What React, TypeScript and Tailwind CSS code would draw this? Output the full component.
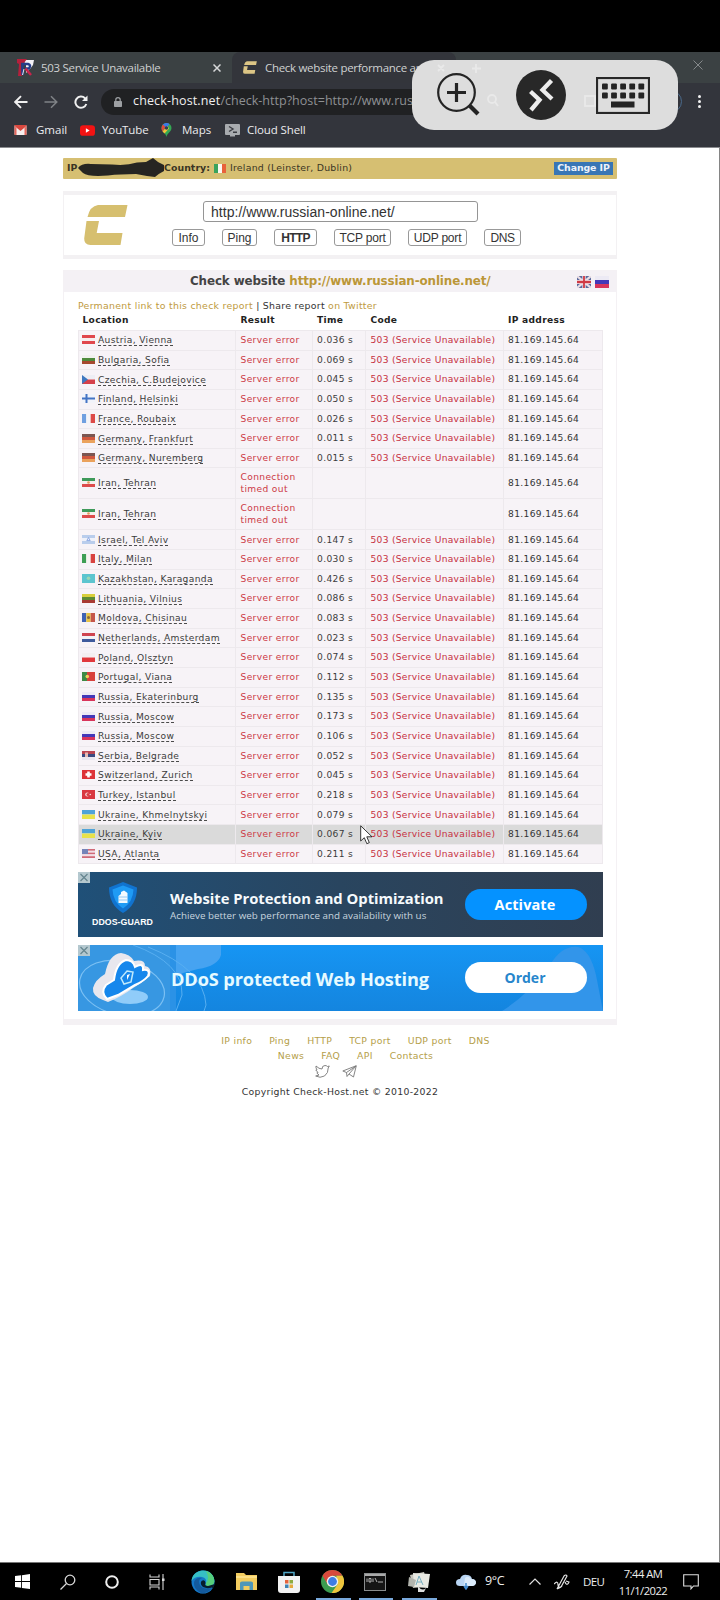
import React from "react";

type Row = [flag: string, location: string, time: string | null];

const rows: Row[] = [
  ["at", "Austria, Vienna", "0.036 s"],
  ["bg", "Bulgaria, Sofia", "0.069 s"],
  ["cz", "Czechia, C.Budejovice", "0.045 s"],
  ["fi", "Finland, Helsinki", "0.050 s"],
  ["fr", "France, Roubaix", "0.026 s"],
  ["de", "Germany, Frankfurt", "0.011 s"],
  ["de", "Germany, Nuremberg", "0.015 s"],
  ["ir", "Iran, Tehran", null],
  ["ir", "Iran, Tehran", null],
  ["il", "Israel, Tel Aviv", "0.147 s"],
  ["it", "Italy, Milan", "0.030 s"],
  ["kz", "Kazakhstan, Karaganda", "0.426 s"],
  ["lt", "Lithuania, Vilnius", "0.086 s"],
  ["md", "Moldova, Chisinau", "0.083 s"],
  ["nl", "Netherlands, Amsterdam", "0.023 s"],
  ["pl", "Poland, Olsztyn", "0.074 s"],
  ["pt", "Portugal, Viana", "0.112 s"],
  ["ru", "Russia, Ekaterinburg", "0.135 s"],
  ["ru", "Russia, Moscow", "0.173 s"],
  ["ru", "Russia, Moscow", "0.106 s"],
  ["rs", "Serbia, Belgrade", "0.052 s"],
  ["ch", "Switzerland, Zurich", "0.045 s"],
  ["tr", "Turkey, Istanbul", "0.218 s"],
  ["ua", "Ukraine, Khmelnytskyi", "0.079 s"],
  ["ua", "Ukraine, Kyiv", "0.067 s"],
  ["us", "USA, Atlanta", "0.211 s"],
];

const horizontal: Record<string, string[]> = {
  at: ["#e0474c", "#f6eeee", "#e0474c"],
  bg: ["#f1f1ee", "#4d8a3c", "#a5492f"],
  cz: ["#eeeef4", "#d5404a"],
  de: ["#7b5652", "#d0583f", "#eaa25c"],
  ir: ["#3f9a5a", "#f6f1ee", "#dd4c4c"],
  il: ["#b9cdec", "#eef1fa", "#b9cdec"],
  lt: ["#d8cf3c", "#5c8a35", "#a83a32"],
  nl: ["#cf4450", "#f2f2f6", "#3d5a9c"],
  pl: ["#f3eff1", "#e0383c"],
  ru: ["#eceaf4", "#4338b8", "#d8345a"],
  rs: ["#b94450", "#3a4a80", "#e9e6ee"],
  ua: ["#4fa3d8", "#e8e24a"],
  us: ["#d06a78", "#efdfe6", "#d06a78", "#efdfe6", "#d06a78"],
};

const vertical: Record<string, string[]> = {
  fr: ["#6f9fe0", "#f4f4f8", "#dd4a48"],
  it: ["#3d9e54", "#f6f4f2", "#d8423f"],
  ie: ["#3aa35c", "#fbf7f0", "#e8623a"],
  md: ["#3f62b4", "#e8c343", "#c5564a"],
};

const base: Record<string, string> = {
  fi: "#f1f3fa",
  kz: "#5cc5cf",
  pt: "#d8413c",
  ch: "#dd3338",
  tr: "#d93840",
  gb: "#5a6a9c",
};

function Flag({ code, className = "w-[13px] h-[9px]" }: { code: string; className?: string }) {
  const h = horizontal[code];
  const v = vertical[code];
  return (
    <svg viewBox="0 0 13 9" preserveAspectRatio="none" className={`shrink-0 ${className}`}>
      <rect width="13" height="9" fill={base[code] ?? "#fff"} />
      {h?.map((c, i) => <rect key={i} y={(9 / h.length) * i} width="13" height={9 / h.length} fill={c} />)}
      {v?.map((c, i) => <rect key={i} x={(13 / v.length) * i} width={13 / v.length} height="9" fill={c} />)}
      {code === "cz" && <path d="M0 0L6 4.5L0 9z" fill="#3f78c0" />}
      {code === "fi" && <path d="M0 4.5H13M4.5 0V9" stroke="#4474c4" strokeWidth="2" />}
      {code === "ir" && <circle cx="6.5" cy="4.5" r="1.3" fill="#e59a5e" />}
      {code === "il" && <path d="M6.5 2.6L8.2 5.6H4.8z" fill="none" stroke="#7a9be0" strokeWidth=".8" />}
      {code === "kz" && <circle cx="6.5" cy="4.3" r="1.8" fill="#9bd8b4" />}
      {code === "md" && <circle cx="6.5" cy="4.5" r="1.5" fill="#8a6a3a" />}
      {code === "pt" && <><rect width="5" height="9" fill="#3e8a45" /><circle cx="5.3" cy="4.5" r="1.8" fill="#ecd35a" /></>}
      {code === "ch" && <path d="M3.5 4.5H9.5M6.5 1.5V7.5" stroke="#fff" strokeWidth="2.6" />}
      {code === "tr" && <><circle cx="5.3" cy="4.5" r="2.1" fill="#f7d8d8" /><circle cx="6.1" cy="4.5" r="1.6" fill="#d93840" /><circle cx="8.3" cy="4.5" r=".8" fill="#f7d8d8" /></>}
      {code === "rs" && <rect x="3" y="1.5" width="3" height="4.5" fill="#e5b9b4" />}
      {code === "us" && <rect width="6" height="5" fill="#7584b8" />}
      {code === "gb" && <><path d="M0 0L13 9M13 0L0 9" stroke="#e9dde4" strokeWidth="1.8" /><path d="M0 4.5H13M6.5 0V9" stroke="#f6eef0" strokeWidth="3" /><path d="M0 4.5H13M6.5 0V9" stroke="#cf3a44" strokeWidth="1.7" /></>}
    </svg>
  );
}

function Logo({ className, fill }: { className: string; fill: string }) {
  return (
    <svg viewBox="0 0 44 40" className={className} fill={fill}>
      <path d="M14 0H43.500L41 12H3.500Q6 1 14 0zM2.500 16H15L12.700 28H38.500L36.500 40H6.500Q0 40 .2 33.500z" />
    </svg>
  );
}

function Tabs() {
  return (
    <div className="flex h-[31px] bg-[#3b4143] text-[11.5px] text-[#cfd1d2]">
      <div className="flex w-[232px] items-center pl-[17px]">
        <svg viewBox="0 0 17 17" className="size-[17px]">
          <path d="M5 1H17L16 6L13 10L9 14V5z" fill="#f3f1f6" />
          <path d="M0 0H10L7 4H4V9L5 17H1L2 5L0 4z" fill="#b5203c" />
          <path d="M5.500 16V5H11Q14.500 6 12 9.500H8" fill="none" stroke="#253c8a" strokeWidth="2.500" />
          <path d="M5.500 16L7 10" stroke="#e9e6f0" strokeWidth="1" /><path d="M8.500 9.500L14 16" stroke="#c8244c" strokeWidth="2.500" />
        </svg>
        <span className="ml-[7px] w-[172px] whitespace-nowrap tracking-[-0.3px]">503 Service Unavailable</span>
        <svg viewBox="0 0 8 8" className="size-2" stroke="#d6d8d9" strokeWidth="1.500"><path d="M.5.5L7.500 7.500M7.500.5L.5 7.500" /></svg>
      </div>
      <div className="flex w-[224px] items-center rounded-t-lg bg-[#33353b] pl-[11px]">
        <Logo className="h-[13px] w-[14px]" fill="#dcc585" />
        <span className="ml-2 w-[180px] whitespace-nowrap tracking-[-0.3px]">Check website performance and</span>
      </div>
      <div className="flex flex-1 items-center justify-end pr-[17px] pb-[5px]">
        <svg viewBox="0 0 10 10" className="size-[10px]" stroke="#85898b" strokeWidth="1"><path d="M.5.5L9.500 9.500M9.500.5L.5 9.500" /></svg>
      </div>
    </div>
  );
}

function Toolbar() {
  return (
    <div className="flex h-[37px] items-center bg-[#33353c]">
      <svg viewBox="0 0 14 14" className="ml-[14px] size-[14px]" fill="none" stroke="#f0f0f0" strokeWidth="1.900"><path d="M13.500 7H1.500M7 1.200L1.200 7L7 12.800" /></svg>
      <svg viewBox="0 0 14 14" className="ml-4 size-[14px]" fill="none" stroke="#808387" strokeWidth="1.500"><path d="M.5 7H12.500M7 1.200L12.800 7L7 12.800" /></svg>
      <svg viewBox="0 0 14 14" className="ml-[16px] size-[14px]" fill="none" stroke="#f0f0f0" strokeWidth="2"><path d="M12.300 9A5.600 5.600 0 1 1 11 3.200L12.500 4.500" /><path d="M13.500.5V6H8z" fill="#f0f0f0" stroke="none" /></svg>
      <div className="ml-[13px] flex h-[26px] w-[470px] items-center rounded-full bg-[#202123] pl-[13px] text-[12.5px] text-[#8e9093]">
        <svg viewBox="0 0 8 10" className="h-[10px] w-2"><path d="M1.800 5V2.800a2.200 2.200 0 0 1 4.400 0V5" fill="none" stroke="#9da0a3" strokeWidth="1.200" /><rect y="4" width="8" height="6" rx=".8" fill="#9da0a3" /></svg>
        <span className="ml-[11px] tracking-[0.02px] whitespace-nowrap"><span className="font-medium tracking-[0.15px] text-[#f0f0f0]">check-host.net</span>/check-http?host=http://www.russian-online.net</span>
      </div>
      <div className="ml-[24px] h-[23px] w-[87px] rounded-full border border-[#4a6a8c]" />
      <div className="ml-[16px] flex flex-col gap-[2.5px]">
        {[0, 1, 2].map((i) => <span key={i} className="size-[2.5px] rounded-full bg-[#f2f2f2]" />)}
      </div>
    </div>
  );
}

function Bookmarks() {
  return (
    <div className="flex h-[28px] items-center border-b border-[#8b8c90] bg-[#33353c] pb-[7px] text-[11.5px] text-[#ececee]">
      <svg viewBox="0 0 12 10" className="ml-[14px] h-[10px] w-[13px]"><rect width="12" height="10" rx="1" fill="#f6eeee" /><path d="M0 1L6 6L12 1V0H0z" fill="#d9483f" /><path d="M0 1V10H2V3zM12 1V10H10V3z" fill="#e5665c" /></svg>
      <span className="ml-[9px] w-[44px]">Gmail</span>
      <svg viewBox="0 0 14 10" className="h-[11px] w-[15px]"><rect width="14" height="10" rx="3" fill="#f31313" /><path d="M5.500 3V7.200L9 5z" fill="#fff" /></svg>
      <span className="ml-[7px] w-[59px] tracking-[-0.1px]">YouTube</span>
      <svg viewBox="0 0 10 14" className="h-[14px] w-[11px]">
        <path d="M5 14C4.500 10 0 9 0 5A5 5 0 0 1 5 0A5 5 0 0 1 10 5C10 9 5.500 10 5 14z" fill="#34a853" />
        <path d="M1 2A5 5 0 0 1 8 1L5 5z" fill="#3c78e8" /><path d="M0 5Q0 3 1.400 1.500L4 4L1 8.500Q0 7 0 5z" fill="#e04a3c" /><path d="M1 8.500L6 3L7.500 5.500L3 10.500z" fill="#f3c03b" /><circle cx="5" cy="5" r="1.700" fill="#2c3e58" />
      </svg>
      <span className="ml-[10px] w-[43px]">Maps</span>
      <svg viewBox="0 0 15 13" className="h-[13px] w-[15px]"><rect width="15" height="11" rx="1" fill="#a8abaf" /><path d="M5 12.500H10V11H5z" fill="#a8abaf" /><path d="M4 2.500L8 5L4 7.500M8 8.300H12" fill="none" stroke="#3a3c42" strokeWidth="1.400" /></svg>
      <span className="ml-[7px] tracking-[-0.1px] whitespace-nowrap">Cloud Shell</span>
    </div>
  );
}

function RemoteControls() {
  return (
    <div className="absolute top-[60px] left-[412px] flex h-[70px] w-[266px] items-center rounded-[22px] bg-[#dddddd]">
      <svg viewBox="0 0 266 70" className="absolute inset-0 h-[70px] w-[266px]" fill="none" stroke="#e9e9e9" strokeWidth="1.800">
        <path d="M26 5L32 11M32 5L26 11M64 4V13M60 8.500H69" /><circle cx="80" cy="39" r="4" /><path d="M83 42L86 46" /><rect x="173" y="36" width="10" height="10" />
      </svg>
      <svg viewBox="0 0 44 44" className="relative ml-[24px] size-[44px]" fill="none" stroke="#242424">
        <circle cx="20.500" cy="19.500" r="18.300" strokeWidth="2.200" /><path d="M11 19.500H30M20.500 10V29" strokeWidth="3.200" /><path d="M33 32L42 41" strokeWidth="4.200" />
      </svg>
      <svg viewBox="0 0 50 50" className="relative ml-[36px] size-[50px]">
        <circle cx="25" cy="25" r="25" fill="#282828" />
        <path d="M14.500 21.500L23.500 30L15 40M35.500 10.500L26.500 20L36 29" fill="none" stroke="#ededed" strokeWidth="4.300" />
      </svg>
      <svg viewBox="0 0 54 37" className="relative ml-[30px] h-[37px] w-[54px]">
        <rect x="1" y="1" width="52" height="35" fill="none" stroke="#282828" strokeWidth="2.200" />
        {[0, 1].map((r) => [0, 1, 2, 3, 4].map((c) => <rect key={`${r}${c}`} x={6 + c * 9.1} y={6.5 + r * 9} width="5.800" height="6" rx="1" fill="#242424" />))}
        <rect x="15" y="24.500" width="23.500" height="6" fill="#242424" />
      </svg>
    </div>
  );
}

function IpBar() {
  return (
    <div className="relative flex h-[21px] items-center rounded-[1px] bg-[#d6bf72] pr-[4px] pl-1 text-[9.4px] text-[#3a3524]">
      <b className="w-[97px]">IP</b>
      <b className="w-[50px] tracking-[0.05px]">Country:</b>
      <Flag code="ie" className="h-[9px] w-[12px]" />
      <span className="ml-1 flex-1 tracking-[0.22px]">Ireland (Leinster, Dublin)</span>
      <span className="flex h-[13px] w-[59px] items-center justify-center bg-[#3876b5] text-[9.4px] font-bold tracking-[-0.1px] text-[#eef3fa]">Change IP</span>
      <svg viewBox="0 0 87 20" className="absolute top-0 left-[15px] h-5 w-[87px]">
        <path d="M0 10Q4 5 13 6L34 6.500Q48 8 59 4.500L68 4L75 0L80 4L86 7V13Q80 16 77 19L69 18L58 16Q42 16 30 17.500Q10 19 5 15z" fill="#262522" />
      </svg>
    </div>
  );
}

function SearchBox() {
  return (
    <div className="mt-[12px] flex h-[68px] border border-[#f3f1f3] border-t-4 border-b-4">
      <Logo className="mt-[10px] ml-5 h-[40px] w-[44px]" fill="#d6bf6f" />
      <div className="ml-[44px] pt-[6px] font-['Liberation_Sans',sans-serif] text-[#333]">
        <div className="ml-[31px] flex h-[21px] w-[275px] items-center rounded-[3px] border border-[#959595] px-[7px] pt-px text-[14px] tracking-[0.03px]">http://www.russian-online.net/</div>
        <div className="mt-[7px] flex gap-[17px] text-[12px]">
          <span className="flex h-[17px] w-[33px] items-center justify-center rounded-[3px] border border-[#999]">Info</span>
          <span className="flex h-[17px] w-[35px] items-center justify-center rounded-[3px] border border-[#999]">Ping</span>
          <span className="flex h-[17px] w-[43px] items-center justify-center rounded-[3px] border border-[#999] font-bold tracking-[-0.7px]">HTTP</span>
          <span className="flex h-[17px] w-[57px] items-center justify-center rounded-[3px] border border-[#999] tracking-[-0.2px]">TCP port</span>
          <span className="flex h-[17px] w-[59px] items-center justify-center rounded-[3px] border border-[#999] tracking-[-0.2px]">UDP port</span>
          <span className="flex h-[17px] w-[37px] items-center justify-center rounded-[3px] border border-[#999] tracking-[-0.5px]">DNS</span>
        </div>
      </div>
    </div>
  );
}

function Results() {
  return (
    <div className="w-[525px] text-[9.1px] leading-[11.5px] tracking-[0.36px]">
      <div className="grid h-[16px] grid-cols-[158px_76.500px_53.500px_137.500px_1fr] items-center font-bold tracking-[0.3px] text-[#222] [&>span]:pl-[4.500px]">
        <span>Location</span><span>Result</span><span>Time</span><span>Code</span><span>IP address</span>
      </div>
      <div className="mt-px border-t border-l border-[#ede9ed]">
        {rows.map(([flag, location, time], i) => (
          <div
            key={i}
            className={`grid grid-cols-[157px_76.500px_53.500px_137.500px_1fr] [&>div]:flex [&>div]:items-center [&>div]:border-r [&>div]:border-b [&>div]:border-[#ede9ed] [&>div]:pt-px [&>div]:pl-[4.500px] ${time ? "h-[19.65px]" : "h-[31px]"} ${i === 24 ? "bg-[#dadada] [&>div]:border-[#d6d6d6]" : "bg-[#f7f3f7]"}`}
          >
            <div className="gap-[3px] whitespace-nowrap text-[#3b3b3b]">
              <Flag code={flag} className="-mt-[2px] -ml-[1.500px] h-[9px] w-[13px]" />
              <span className="border-b border-dashed border-[#4a4a4a] leading-[10px]">{location}</span>
            </div>
            <div className="text-[#cc3945]">{time ? "Server error" : <>Connection<br />timed out</>}</div>
            <div className="text-[#3b3b3b]">{time}</div>
            <div className="tracking-[0.3px] whitespace-nowrap text-[#c62f40]">{time && "503 (Service Unavailable)"}</div>
            <div className="text-[#333]">81.169.145.64</div>
          </div>
        ))}
      </div>
    </div>
  );
}

function AdClose() {
  return (
    <svg viewBox="0 0 12 11" className="absolute top-0 left-0 h-[11px] w-3"><rect width="12" height="11" fill="#b4c8cf" /><path d="M2.500 2L9.500 9M9.500 2L2.500 9" stroke="#65858f" strokeWidth="1.200" /></svg>
  );
}

function Ads() {
  return (
    <div className="w-[525px] font-['Open_Sans',sans-serif] text-white">
      <div className="relative mt-[8px] flex h-[65px] items-center bg-linear-to-r from-[#1f5078] via-[#29455f] to-[#303e50]">
        <AdClose />
        <div className="mr-[3px] flex w-[89px] flex-col items-center">
          <svg viewBox="0 0 28 31" className="mt-[2px] h-[31px] w-7">
            <path d="M14 0L28 5.500Q28 23 14 31Q0 23 0 5.500z" fill="#1173cf" /><path d="M14 3.500L24.500 7.500Q24 20 14 26.500Q4 20 3.500 7.500z" fill="#1f9bf5" />
            <path d="M9.500 21V14L12 12V10L15 8.500L18.500 11V21z" fill="#f3faff" /><path d="M9.500 15H18.500M9.500 18H18.500" stroke="#7fbdf0" strokeWidth=".8" />
          </svg>
          <span className="mt-[2px] font-['Liberation_Sans',sans-serif] text-[8.8px] leading-[14px] font-bold tracking-[0.02px] whitespace-nowrap">DDOS-GUARD</span>
        </div>
        <div className="w-[295px] pt-[2px] whitespace-nowrap">
          <div className="text-[14.8px] leading-[20px] font-bold tracking-[-0.01px] text-[#f5fafd]">Website Protection and Optimization</div>
          <div className="text-[9.8px] leading-[16px] tracking-[0.02px] text-[#c8d5df]">Achieve better web performance and availability with us</div>
        </div>
        <span className="flex h-[31px] w-[122px] items-center justify-center rounded-full bg-[#0592ff] pr-[2px] pb-px text-[14.5px] font-bold tracking-[0.1px]">Activate</span>
      </div>
      <div className="relative mt-[8px] flex h-[66px] items-center overflow-hidden bg-linear-to-b from-[#1695f3] to-[#1485df]">
        <svg viewBox="0 0 525 66" className="absolute inset-0 h-[66px] w-[525px]" fill="none">
          <rect width="92" height="66" fill="#3797e2" />
          <path d="M92 0H98V66H92z" fill="#2b92e6" />
          <path d="M98 0H143V10Q140 21 120 24L105 28L98 32z" fill="#46a3f1" /><path d="M424 66Q450 50 472 20Q484 0 500 2Q512 5 518 30L525 66z" fill="#3295ea" />
          <ellipse cx="44" cy="43" rx="43" ry="27" transform="rotate(12 44 43)" stroke="#7cc0f3" strokeWidth="1.200" />
          <path d="M70 2Q126 24 128 60L126 66M55 0Q105 18 104 50L98 66" stroke="#58aff1" />
          <ellipse cx="52" cy="52" rx="18" ry="7" fill="#90ccf9" />
          <path d="M25 55Q14 51 15 43Q17 35 27 29Q31 9 43 8Q52 9 56 16Q67 14 67 21Q74 22 72 31Q64 38 55 43Q43 52 30 57z" fill="#e8e7ee" />
          <path d="M29 54Q22 47 28 40L36 35Q38 18 48 15Q55 15 57 22Q66 17 65 25Q73 24 70 31Q66 36 57 40L40 50z" fill="#1687ec" stroke="#fff" strokeWidth="2" />
          <path d="M49 26L55 27L53 37L46 39L43 33z" stroke="#bfe9fc" strokeWidth="1.500" /><path d="M49 30L52 29L49 35z" fill="#fff" />
        </svg>
        <AdClose />
        <div className="relative ml-[93px] w-[294px] pt-[3px] text-[18.2px] font-bold tracking-[-0.13px] whitespace-nowrap text-[#e6faff]">DDoS protected Web Hosting</div>
        <span className="relative mb-px flex h-[31px] w-[122px] items-center justify-center rounded-full bg-white pr-[2px] pb-px text-[14px] font-bold text-[#2786cc]">Order</span>
      </div>
    </div>
  );
}

function Footer() {
  return (
    <div className="mt-[8px] ml-[2px] flex flex-col items-center text-[9.3px] leading-[15px] tracking-[0.3px] text-[#b5a04a]">
      <div className="ml-[29px] flex gap-[17px]">{["IP info", "Ping", "HTTP", "TCP port", "UDP port", "DNS"].map((t) => <span key={t}>{t}</span>)}</div>
      <div className="ml-[29px] flex gap-[17px]">{["News", "FAQ", "API", "Contacts"].map((t) => <span key={t}>{t}</span>)}</div>
      <div className="mt-[2px] mr-[10px] flex gap-[12px]">
        <svg viewBox="0 0 15 13" className="h-[13px] w-[15px]" fill="none" stroke="#777" strokeWidth=".9"><path d="M1 1Q4 4 7 4Q7 .5 10 .5Q11.500.5 12.500 1.500L14.300 1L13.200 3Q13.500 8 9.500 11Q5 13.500.7 11L4 10L1.800 8L3 7.500L.8 5L2 4.800Q.5 3 1 1z" /></svg>
        <svg viewBox="0 0 15 13" className="h-[13px] w-[15px]" fill="none" stroke="#777" strokeWidth=".9"><path d="M.8 6L14.300.7L11.500 12L7 9L5 11.500L4.500 7.500zM4.500 7.500L14 1L7 9" /></svg>
      </div>
      <div className="mt-[6px] mr-[2px] tracking-[0.3px] text-[#333]">Copyright Check-Host.net © 2010-2022</div>
    </div>
  );
}

function Taskbar() {
  return (
    <div className="relative flex h-[38px] shrink-0 items-center border-t border-[#777] bg-black text-[11.5px] text-[#ededed]">
      <svg viewBox="0 0 16 16" className="ml-[15px] size-[15px]" fill="#fff"><path d="M0 2.200L6.500 1.300V7.500H0zM7.400 1.200L16 0V7.500H7.400zM0 8.500H6.500V14.700L0 13.800zM7.400 8.500H16V16L7.400 14.800z" /></svg>
      <svg viewBox="0 0 16 16" className="ml-[30px] size-4" fill="none" stroke="#d8d8d8" strokeWidth="1.300"><circle cx="10" cy="6" r="4.800" /><path d="M6.500 9.500L.5 15.500" /></svg>
      <svg viewBox="0 0 14 14" className="ml-[29px] size-[14px]" fill="none"><circle cx="7" cy="7" r="5.800" stroke="#eee" strokeWidth="2" /></svg>
      <svg viewBox="0 0 16 16" className="ml-[30px] size-4" fill="none" stroke="#d5d5d5" strokeWidth="1.100"><path d="M1 .5V3H10V.5M1 5.500H10V11H1zM1 15.500V13H10V15.500M14 0V16" /><rect x="13" y="4.500" width="2.500" height="2.500" fill="#ddd" stroke="none" /></svg>
      <svg viewBox="0 0 24 24" className="ml-[26px] size-6">
        <circle cx="12" cy="12" r="11.500" fill="#1478c8" />
        <path d="M.6 11C1 3 8 .5 12.500.5C20 .5 24 7 23.300 12Q22 17 16 16Q14 15 15 13Q16 8 11 7Q4 6 .6 11z" fill="#36bfc5" /><path d="M15 1Q24 4 23.300 12Q22 17 16 16Q14 15 15 13Q19 9 15 1z" fill="#56cf7c" />
        <path d="M11 8Q7 9 8.500 14Q11 20 21 18Q17 24 10 23Q2 19 3 12Q5 7 11 8z" fill="#145a9c" /><path d="M10.500 11Q8.500 14 12 17Q16 19 21 17.500L22 18.500L24 14L17 16Q13 16 14.500 13Q14 9 10.500 11z" fill="#071d2c" />
      </svg>
      <svg viewBox="0 0 21 18" className="ml-[21px] h-[18px] w-[21px]"><path d="M0 0H8L10 2H21V17H0z" fill="#f2cc5f" /><path d="M0 3H21V5H0z" fill="#fbdf86" /><path d="M4 17V10Q4 8.500 6 8.500H15Q17 8.500 17 10V17H13.500V13H7.500V17z" fill="#4f97b9" /></svg>
      <svg viewBox="0 0 22 22" className="ml-[21px] size-[22px]"><path d="M6 6V1.500H16V6" fill="none" stroke="#4fa5c5" strokeWidth="1.500" /><path d="M0 5H22V19Q22 22 19 22H3Q0 22 0 19z" fill="#f2f2f2" /><path d="M7 9H10.500V12.500H7z" fill="#e4643c" /><path d="M11.500 9H15V12.500H11.500z" fill="#8dac3e" /><path d="M7 13.500H10.500V17H7z" fill="#3d84b5" /><path d="M11.500 13.500H15V17H11.500z" fill="#e5aa3c" /></svg>
      <svg viewBox="0 0 24 24" className="ml-[21px] size-[23px]"><circle cx="12" cy="12" r="12" fill="#3c9c50" /><path d="M1.600 6A12 12 0 0 1 22.400 6H12L7 15z" fill="#d84a3c" /><path d="M22.400 6A12 12 0 0 1 11 24L17.200 15L16 6z" fill="#efc53d" /><circle cx="12" cy="12" r="6" fill="#f2f2ee" /><circle cx="12" cy="12" r="4.600" fill="#3f7de4" /></svg>
      <svg viewBox="0 0 22 18" className="ml-[20px] h-[18px] w-[22px]"><rect x=".5" y=".5" width="21" height="17" fill="#151515" stroke="#8a8d8e" /><path d="M1 2H21" stroke="#aaa" strokeWidth="2" /><path d="M3 5.500V9M5 5.500H7V9H5zM9 5.500V9M11 5L13 9M14 9H19" stroke="#c5c5c5" strokeWidth=".9" fill="none" /></svg>
      <svg viewBox="0 0 22 20" className="ml-[22px] h-[20px] w-[22px]"><path d="M2 3L16 0L20 14L5 16z" fill="#c8c8bf" /><path d="M5 1L22 2L20 16L6 15z" fill="#e8e9e2" /><path d="M8 13L11 4L15 13M9 10H14" stroke="#78aebf" fill="none" /><path d="M1 5L8 8L6 15L0 14z" fill="#b2b4ad" /><path d="M10 14Q14 20 18 16L16 20H10z" fill="#ddd" /></svg>
      <svg viewBox="0 0 20 16" className="ml-[26px] h-4 w-5"><path d="M4 12Q0 12 0 8.500Q0 5 4 5Q6 0 11 1Q15 1 16 5Q20 5 20 9Q19 12 16 12z" fill="#b9d5f3" /><path d="M9 4Q12 1 15 5Q20 5 20 9Q19 12 16 12H8z" fill="#dcecfb" /><path d="M10 9V14M8 12L10 15L12 12" stroke="#438bd0" strokeWidth="1.500" fill="none" /></svg>
      <span className="ml-[9px] w-[44px] text-[12.5px] tracking-[-0.4px]">9°C</span>
      <svg viewBox="0 0 12 7" className="h-[7px] w-3" fill="none" stroke="#e0e0e0" strokeWidth="1.200"><path d="M.5 6.500L6 1L11.500 6.500" /></svg>
      <svg viewBox="0 0 16 16" className="ml-[13px] size-4" fill="none" stroke="#e5e5e5" strokeWidth="1.200"><path d="M3 15L10 2Q12 0 13 2L7 13L3 15M0 10Q4 6 4 11Q5 15 8 12M11 8Q13 13 15 8L12 7" /></svg>
      <span className="ml-[13px] w-[33px] tracking-[-0.6px]">DEU</span>
      <div className="w-[54px] text-center text-[11.2px] leading-[17px] tracking-[-0.5px] whitespace-nowrap"><div>7:44 AM</div><div>11/1/2022</div></div>
      <svg viewBox="0 0 16 16" className="ml-[13px] size-4" fill="none" stroke="#e0e0e0" strokeWidth="1.100"><path d="M.7.7H15.300V12H10.500L8 14.800V12H.7z" /></svg>
      <span className="absolute bottom-0 left-[316px] h-[2px] w-[35px] bg-[#79a9dc]" />
      <span className="absolute bottom-0 left-[359px] h-[2px] w-[34px] bg-[#79a9dc]" />
      <span className="absolute bottom-0 left-[402px] h-[2px] w-[35px] bg-[#79a9dc]" />
    </div>
  );
}

export default function App() {
  return (
    <div className="relative flex h-[1600px] w-[720px] flex-col overflow-hidden bg-white font-['Open_Sans',sans-serif]">
      <div className="h-[52px] shrink-0 bg-black" />
      <Tabs />
      <Toolbar />
      <Bookmarks />
      <main className="min-h-0 flex-1 border-r border-[#858585] pt-[10px] pl-[63px] font-['DejaVu_Sans',sans-serif]">
        <div className="w-[554px]">
          <IpBar />
          <SearchBox />
          <section className="mt-[11px] h-[755px] border border-b-[6px] border-[#f4f1f4]">
            <div className="flex h-[21px] items-center bg-[#f4f1f5] pr-[7px] pl-[126px] text-[11.9px] font-bold tracking-[-0.12px] text-[#444]">
              <h1 className="flex-1 pt-px whitespace-nowrap">Check website <span className="text-[#bb9737]">http://www.russian-online.net/</span></h1>
              <Flag code="gb" className="mr-1 h-[12px] w-[14px]" />
              <Flag code="ru" className="h-[12px] w-[14px]" />
            </div>
            <div className="pl-[14px]">
              <div className="mt-[7px] h-[14px] text-[9.4px] leading-[14px] tracking-[0.28px] whitespace-nowrap text-[#c09a3e]">Permanent link to this check report <span className="text-[#333]">| Share report</span> on Twitter</div>
              <Results />
              <Ads />
            </div>
          </section>
          <Footer />
        </div>
      </main>
      <Taskbar />
      <RemoteControls />
      <svg viewBox="0 0 13 20" className="absolute top-[825px] left-[360px] h-5 w-[13px]"><path d="M.7.8V16L4.300 12.700L6.800 18.700L9.300 17.600L6.800 11.800H12z" fill="#fff" stroke="#222" strokeWidth=".9" /></svg>
    </div>
  );
}
